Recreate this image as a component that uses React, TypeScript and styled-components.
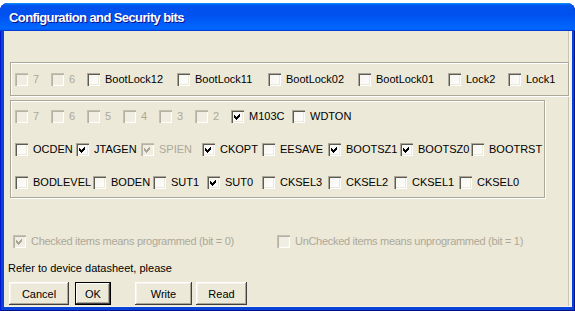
import React from "react";
import styled, { createGlobalStyle } from "styled-components";

const Global = createGlobalStyle`
  html, body { margin: 0; padding: 0; background: #ffffff; }
  body { font-family: "Liberation Sans", Arial, sans-serif; }
  * { box-sizing: border-box; }
`;

const Window = styled.div`
  width: 575px;
  height: 308px;
  margin-top: 3px;
  display: flex;
  flex-direction: column;
  background: #0842d6;
  border-radius: 8px 8px 0 0;
  overflow: hidden;
  box-shadow: inset 1px 0 #0019cf, inset -1px -1px #00138c;
`;

const TitleBar = styled.div`
  height: 28px;
  flex: none;
  display: flex;
  align-items: center;
  padding: 1px 0 0 9px;
  background: linear-gradient(
    180deg,
    #0997ff 0%,
    #0053ee 8%,
    #0050ee 40%,
    #0066ff 88%,
    #0066ff 93%,
    #005bff 95%,
    #003dd7 96%,
    #003dd7 100%
  );
  color: #ffffff;
  font: bold 13px "Liberation Sans", Arial, sans-serif;
  letter-spacing: -0.6px;
  text-shadow: 1px 1px #0f1089;
`;

const Client = styled.div`
  flex: 1;
  margin: 0 3px 4px 4px;
  background: #ece9d8;
  display: flex;
  flex-direction: column;
  padding-top: 31px;
  box-shadow: inset -3px -1px #f4f2e8, inset -4px 0 #c9c5b4;
`;

const GroupBox = styled.div<{ $w: number; $h: number; $top?: number }>`
  width: ${(p) => p.$w}px;
  height: ${(p) => p.$h}px;
  margin: ${(p) => p.$top ?? 0}px 0 0 6px;
  border: 1px solid #aca899;
  box-shadow: 1px 1px 0 #ffffff, inset 1px 1px 0 #ffffff;
  display: flex;
  flex-direction: column;
  justify-content: center;
  gap: 20px;
  padding-left: 4px;
`;

const Row = styled.div`
  display: flex;
  align-items: center;
  height: 13px;
`;

const Item = styled.div<{ $w?: number; $disabled?: boolean; $tight?: boolean }>`
  display: flex;
  align-items: center;
  flex: none;
  width: ${(p) => (p.$w ? `${p.$w}px` : "auto")};
  height: 13px;
  font-size: 11px;
  line-height: 13px;
  white-space: nowrap;
  letter-spacing: ${(p) => (p.$tight ? "-0.3px" : "normal")};
  color: ${(p) => (p.$disabled ? "#aca899" : "#000000")};
`;

const Box = styled.span<{ $disabled?: boolean }>`
  width: 13px;
  height: 13px;
  flex: none;
  margin-right: 5px;
  display: flex;
  align-items: center;
  justify-content: center;
  background: ${(p) =>
    p.$disabled ? "#f0eee3" : "linear-gradient(135deg, #f4f3ee, #ffffff)"};
  box-shadow: ${(p) =>
    p.$disabled
      ? "inset 1px 1px #c4c1b2, inset 2px 2px #b5b2a3, inset -1px -1px #ffffff, inset -2px -2px #f1efe2"
      : "inset 1px 1px #aca899, inset 2px 2px #5e5c52, inset -1px -1px #ffffff, inset -2px -2px #ece9d8"};
`;

const Legend = styled.div`
  display: flex;
  align-items: center;
  height: 13px;
  margin: 37px 0 0 9px;
`;

const Note = styled.div`
  margin: 14px 0 0 4px;
  height: 13px;
  font-size: 11px;
  line-height: 13px;
  color: #000000;
`;

const ButtonBar = styled.div`
  display: flex;
  margin: 7px 0 0 5px;
`;

const Button = styled.button<{ $w: number; $gap: number; $default?: boolean }>`
  width: ${(p) => p.$w}px;
  height: 23px;
  margin-left: ${(p) => p.$gap}px;
  padding: 0;
  border: none;
  background: #ece9d8;
  font: 11px "Liberation Sans", Arial, sans-serif;
  color: #000000;
  box-shadow: ${(p) =>
    p.$default
      ? "inset 0 0 0 1px #000000, inset -2px -2px #404040, inset 2px 2px #ffffff, inset -3px -3px #aca899"
      : "inset -1px -1px #404040, inset 1px 1px #ffffff, inset -2px -2px #aca899, inset 2px 2px #f4f3ee"};
`;

type Bit = {
  label: string;
  w?: number;
  checked?: boolean;
  disabled?: boolean;
  tight?: boolean;
};

const Check = ({ checked, disabled }: { checked?: boolean; disabled?: boolean }) => (
  <Box $disabled={disabled}>
    {checked && (
      <svg width="13" height="13" viewBox="0 0 13 13" shapeRendering="crispEdges">
        <polygon
          points="3,5 5,7 9,3 9,6 5,10 3,8"
          fill={disabled ? "#aca899" : "#000000"}
        />
      </svg>
    )}
  </Box>
);

const CheckItem = ({ label, w, checked, disabled, tight }: Bit) => (
  <Item $w={w} $disabled={disabled} $tight={tight}>
    <Check checked={checked} disabled={disabled} />
    {label}
  </Item>
);

const lockBits: Bit[] = [
  { label: "7", w: 36, disabled: true },
  { label: "6", w: 36, disabled: true },
  { label: "BootLock12", w: 90 },
  { label: "BootLock11", w: 91 },
  { label: "BootLock02", w: 90 },
  { label: "BootLock01", w: 90 },
  { label: "Lock2", w: 60 },
  { label: "Lock1" },
];

const fuseRows: Bit[][] = [
  [
    { label: "7", w: 36, disabled: true },
    { label: "6", w: 36, disabled: true },
    { label: "5", w: 36, disabled: true },
    { label: "4", w: 36, disabled: true },
    { label: "3", w: 36, disabled: true },
    { label: "2", w: 36, disabled: true },
    { label: "M103C", w: 61, checked: true },
    { label: "WDTON" },
  ],
  [
    { label: "OCDEN", w: 61 },
    { label: "JTAGEN", w: 65, checked: true },
    { label: "SPIEN", w: 61, checked: true, disabled: true },
    { label: "CKOPT", w: 60, checked: true },
    { label: "EESAVE", w: 66 },
    { label: "BOOTSZ1", w: 72, checked: true },
    { label: "BOOTSZ0", w: 71, checked: true },
    { label: "BOOTRST" },
  ],
  [
    { label: "BODLEVEL", w: 78 },
    { label: "BODEN", w: 60 },
    { label: "SUT1", w: 54 },
    { label: "SUT0", w: 55, checked: true },
    { label: "CKSEL3", w: 66 },
    { label: "CKSEL2", w: 66 },
    { label: "CKSEL1", w: 65 },
    { label: "CKSEL0" },
  ],
];

export default function App() {
  return (
    <>
      <Global />
      <Window>
        <TitleBar>Configuration and Security bits</TitleBar>
        <Client>
          <GroupBox $w={559} $h={34}>
            <Row>
              {lockBits.map((b, i) => (
                <CheckItem key={i} {...b} />
              ))}
            </Row>
          </GroupBox>
          <GroupBox $w={535} $h={98} $top={4}>
            {fuseRows.map((row, r) => (
              <Row key={r}>
                {row.map((b, i) => (
                  <CheckItem key={i} {...b} />
                ))}
              </Row>
            ))}
          </GroupBox>
          <Legend>
            <CheckItem
              label="Checked items means programmed (bit = 0)"
              w={264}
              checked
              disabled
              tight
            />
            <CheckItem
              label="UnChecked items means unprogrammed (bit = 1)"
              disabled
              tight
            />
          </Legend>
          <Note>Refer to device datasheet, please</Note>
          <ButtonBar>
            <Button $w={60} $gap={0}>Cancel</Button>
            <Button $w={36} $gap={6} $default>OK</Button>
            <Button $w={57} $gap={24}>Write</Button>
            <Button $w={51} $gap={4}>Read</Button>
          </ButtonBar>
        </Client>
      </Window>
    </>
  );
}
